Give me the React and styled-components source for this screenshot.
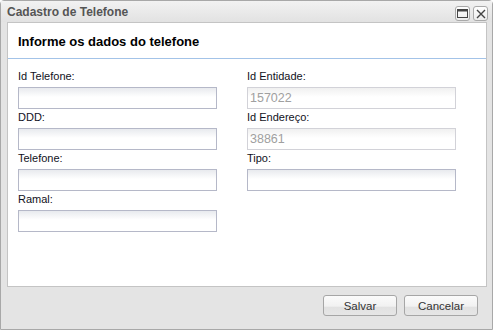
import React from "react";
import styled, { createGlobalStyle } from "styled-components";

const Global = createGlobalStyle`
  html, body { margin: 0; padding: 0; background: #ffffff; }
  body { font-family: "Liberation Sans", Arial, sans-serif; }
  * { box-sizing: border-box; }
`;

const Window = styled.div`
  width: 493px;
  height: 330px;
  border: 1px solid #a8a8a8;
  border-radius: 4px 4px 0 0;
  background: #e4e4e4;
  display: flex;
  flex-direction: column;
`;

const TitleBar = styled.div`
  height: 21px;
  display: flex;
  align-items: center;
  justify-content: space-between;
  padding: 0 4px 0 6px;
  background: linear-gradient(#f2f2f2, #e2e2e2);
`;

const Title = styled.div`
  font-size: 12px;
  font-weight: bold;
  color: #555555;
`;

const Tools = styled.div`
  display: flex;
  gap: 3px;
  margin-top: 4px;
`;

const ToolButton = styled.div`
  width: 15px;
  height: 15px;
  border: 1px solid #a9a9a9;
  border-radius: 3px;
  background: linear-gradient(#ffffff, #ececec);
  display: flex;
  align-items: center;
  justify-content: center;
`;

const Body = styled.div`
  flex: 1;
  display: flex;
  flex-direction: column;
  padding: 0 5px 0 6px;
`;

const Panel = styled.div`
  height: 265px;
  background: #ffffff;
  border: 1px solid #c4c4c4;
  display: flex;
  flex-direction: column;
`;

const PanelHeader = styled.div`
  height: 36px;
  padding: 1px 0 0 10px;
  display: flex;
  align-items: center;
  font-size: 13px;
  font-weight: bold;
  color: #000000;
  border-bottom: 1px solid #a3c3e8;
`;

const Form = styled.div`
  display: flex;
  gap: 30px;
  padding: 11px 0 0 10px;
`;

const Column = styled.div`
  width: ${(p) => p.$width}px;
  display: flex;
  flex-direction: column;
  gap: 2px;
`;

const Field = styled.div`
  display: flex;
  flex-direction: column;
`;

const Label = styled.label`
  font-size: 11px;
  line-height: 13px;
  height: 17px;
  color: #111122;
`;

const Input = styled.input`
  height: 22px;
  width: 100%;
  padding: 0 2px;
  margin: 0;
  font-family: "Liberation Sans", Arial, sans-serif;
  font-size: 12.5px;
  color: ${(p) => (p.disabled ? "#a0a0a0" : "#000")};
  border: 1px solid ${(p) => (p.disabled ? "#d2d2d8" : "#b5b8c8")};
  background: ${(p) =>
    p.disabled
      ? "linear-gradient(#f0f0f0, #ffffff 45%)"
      : "linear-gradient(#e8eaee, #ffffff 45%)"};
  outline: none;
  -webkit-text-fill-color: ${(p) => (p.disabled ? "#a0a0a0" : "#000")};
  opacity: 1;
`;

const Footer = styled.div`
  flex: 1;
  display: flex;
  justify-content: flex-end;
  align-items: flex-start;
  gap: 7px;
  padding: 8px 9px 0 0;
`;

const Button = styled.button`
  width: 74px;
  height: 21px;
  border: 1px solid #a6a6a6;
  border-radius: 3px;
  background: linear-gradient(#fbfbfb 0%, #f1f1f1 55%, #e1e1e1 56%, #e6e6e6 100%);
  font-family: "Liberation Sans", Arial, sans-serif;
  font-size: 11.5px;
  color: #333333;
  padding: 0;
  cursor: pointer;
`;

const RestoreIcon = () => (
  <svg width="11" height="9" viewBox="0 0 11 9">
    <rect x="0.5" y="0.5" width="10" height="8" fill="none" stroke="#444" />
    <rect x="0.5" y="0.5" width="10" height="2" fill="#444" />
  </svg>
);

const CloseIcon = () => (
  <svg width="10" height="10" viewBox="0 0 10 10">
    <path d="M1 1 L9 9 M9 1 L1 9" stroke="#444" strokeWidth="1.4" />
  </svg>
);

const left = [
  { label: "Id Telefone:", value: "" },
  { label: "DDD:", value: "" },
  { label: "Telefone:", value: "" },
  { label: "Ramal:", value: "" },
];

const right = [
  { label: "Id Entidade:", value: "157022", disabled: true },
  { label: "Id Endereço:", value: "38861", disabled: true },
  { label: "Tipo:", value: "" },
];

const renderFields = (fields) =>
  fields.map((f) => (
    <Field key={f.label}>
      <Label>{f.label}</Label>
      <Input defaultValue={f.value} disabled={f.disabled} />
    </Field>
  ));

export default function App() {
  return (
    <>
      <Global />
      <Window>
        <TitleBar>
          <Title>Cadastro de Telefone</Title>
          <Tools>
            <ToolButton>
              <RestoreIcon />
            </ToolButton>
            <ToolButton>
              <CloseIcon />
            </ToolButton>
          </Tools>
        </TitleBar>
        <Body>
          <Panel>
            <PanelHeader>Informe os dados do telefone</PanelHeader>
            <Form>
              <Column $width={199}>{renderFields(left)}</Column>
              <Column $width={209}>{renderFields(right)}</Column>
            </Form>
          </Panel>
          <Footer>
            <Button>Salvar</Button>
            <Button>Cancelar</Button>
          </Footer>
        </Body>
      </Window>
    </>
  );
}
